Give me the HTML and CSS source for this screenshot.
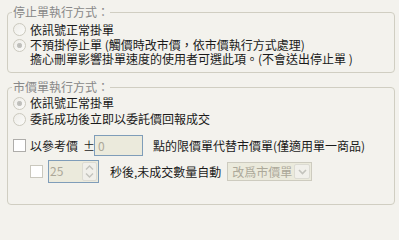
FILE: index.html
```html
<!DOCTYPE html>
<html lang="zh-Hant">
<head>
<meta charset="utf-8">
<title>停止單執行方式</title>
<link rel="stylesheet" href="styles.css">
</head>
<body>
<div class="panel">
  <fieldset class="group group-stop">
    <legend class="group-title">停止單執行方式：</legend>
    <label class="row row-single">
      <input type="radio" class="radio" name="stop" disabled>
      <span class="text">依訊號正常掛單</span>
    </label>
    <label class="row row-multi">
      <input type="radio" class="radio" name="stop" checked disabled>
      <span class="text-block">
        <span class="line">不預掛停止單 (觸價時改市價，依市價執行方式處理)</span>
        <span class="line">擔心刪單影響掛單速度的使用者可選此項。(不會送出停止單 )</span>
      </span>
    </label>
  </fieldset>

  <fieldset class="group group-market">
    <legend class="group-title">市價單執行方式：</legend>
    <label class="row row-single">
      <input type="radio" class="radio" name="market" checked disabled>
      <span class="text">依訊號正常掛單</span>
    </label>
    <label class="row row-single">
      <input type="radio" class="radio" name="market" disabled>
      <span class="text">委託成功後立即以委託價回報成交</span>
    </label>

    <div class="row row-limit">
      <span class="checkbox"></span>
      <span class="text label-ref">以參考價<span class="plusminus">±</span></span>
      <span class="field field-points">0</span>
      <span class="text label-after">點的限價單代替市價單(僅適用單一商品)</span>
    </div>

    <div class="row row-timeout">
      <span class="checkbox checkbox-light"></span>
      <span class="spin">
        <span class="spin-value">25</span>
        <span class="spin-buttons">
          <span class="spin-btn">
            <svg width="9" height="5" viewBox="0 0 9 5"><path d="M1 4.5 L4.5 1 L8 4.5" fill="none" stroke="#c3c3bd" stroke-width="1.4"/></svg>
          </span>
          <span class="spin-btn">
            <svg width="9" height="5" viewBox="0 0 9 5"><path d="M1 0.5 L4.5 4 L8 0.5" fill="none" stroke="#c3c3bd" stroke-width="1.4"/></svg>
          </span>
        </span>
      </span>
      <span class="text label-seconds">秒後,未成交數量自動</span>
      <span class="select">
        <span class="select-value">改爲市價單</span>
        <span class="select-btn">
          <svg width="9" height="6" viewBox="0 0 9 6"><path d="M1 1 L4.5 4.5 L8 1" fill="none" stroke="#c3c3bd" stroke-width="1.6"/></svg>
        </span>
      </span>
    </div>
  </fieldset>
</div>
</body>
</html>
```

FILE: styles.css
```css
html, body {
  margin: 0;
  padding: 0;
  background: #f3f2ed;
}

body {
  width: 399px;
  height: 217px;
  overflow: hidden;
  font-family: "Noto Sans CJK TC", "Noto Sans", sans-serif;
  font-size: 12px;
  color: #1a1a1a;
}

.panel {
  padding-top: 5px;
}

.group {
  margin: 0 4px 0 7px;
  padding: 2px 4px 6px 4px;
  border: 1px solid #d0cec2;
  border-radius: 4px;
  min-width: 0;
}

.group-market {
  margin-top: 7px;
  padding-top: 1px;
  padding-bottom: 21px;
}

.group-title {
  padding: 0 1px;
  margin: 0;
  height: 14px;
  line-height: 14px;
  font-size: 12px;
  color: #888888;
}

.row {
  display: flex;
  align-items: center;
  white-space: nowrap;
}

.row-single {
  height: 16px;
  line-height: 16px;
}

.group-stop .row-single {
  height: 17px;
  line-height: 17px;
}

.row-multi {
  align-items: flex-start;
}

.row-multi .radio {
  margin-top: 1px;
}

.text-block {
  display: flex;
  flex-direction: column;
}

.line {
  display: block;
  height: 14px;
  line-height: 14px;
}

.radio {
  appearance: none;
  -webkit-appearance: none;
  box-sizing: border-box;
  width: 13px;
  height: 13px;
  margin: 0 4px 0 1px;
  flex: none;
  border: 1px solid #cbc9be;
  border-radius: 50%;
  background: linear-gradient(135deg, #eeede8, #fbfbf9);
}

.radio:checked {
  background:
    radial-gradient(circle at 50% 50%, #b9b9b5 0, #c4c4c0 2.2px, rgba(255,255,255,0) 3px),
    linear-gradient(135deg, #eeede8, #fbfbf9);
}

.checkbox {
  box-sizing: border-box;
  flex: none;
  width: 13px;
  height: 13px;
  margin: 0 4px 0 1px;
  border: 1px solid #aeadaa;
  background: #ffffff;
}

.checkbox-light {
  margin-left: 18px;
  margin-right: 5px;
  border-color: #cac8be;
}

.row-limit {
  margin-top: 8px;
  height: 21px;
  line-height: 21px;
}

.label-ref {
  width: 64px;
  flex: none;
}

.plusminus {
  margin-left: 5px;
}

.field {
  box-sizing: border-box;
  flex: none;
  height: 21px;
  border: 1px solid #7f9db9;
  background: #ebeadc;
  color: #aca899;
  line-height: 19px;
  padding-left: 3px;
}

.field-points {
  width: 49px;
  margin-right: 10px;
}

.row-timeout {
  margin-top: 4px;
  height: 23px;
  line-height: 23px;
}

.spin {
  box-sizing: border-box;
  flex: none;
  display: flex;
  width: 51px;
  height: 23px;
  border: 1px solid #7f9db9;
  background: #ebeadc;
  padding: 1px 1px 1px 0;
  margin-right: 11px;
}

.spin-value {
  flex: 1;
  color: #aca899;
  line-height: 17px;
  padding-left: 1px;
}

.spin-buttons {
  box-sizing: border-box;
  width: 15px;
  display: flex;
  flex-direction: column;
  border: 1px solid #dcdbd3;
  border-radius: 2px;
  background: #f0efea;
}

.spin-btn {
  flex: 1;
  display: flex;
  align-items: center;
  justify-content: center;
}

.label-seconds {
  margin-right: 6px;
}

.select {
  box-sizing: border-box;
  flex: none;
  display: flex;
  align-items: center;
  width: 85px;
  height: 19px;
  border: 1px solid #cdcbbf;
  background: #ebeadc;
  padding: 1px;
}

.select-value {
  flex: 1;
  color: #aca899;
  line-height: 15px;
  padding-left: 3px;
}

.select-btn {
  box-sizing: border-box;
  width: 16px;
  height: 15px;
  display: flex;
  align-items: center;
  justify-content: center;
  border: 1px solid #dcdbd3;
  border-radius: 2px;
  background: #f1f0eb;
}
```
